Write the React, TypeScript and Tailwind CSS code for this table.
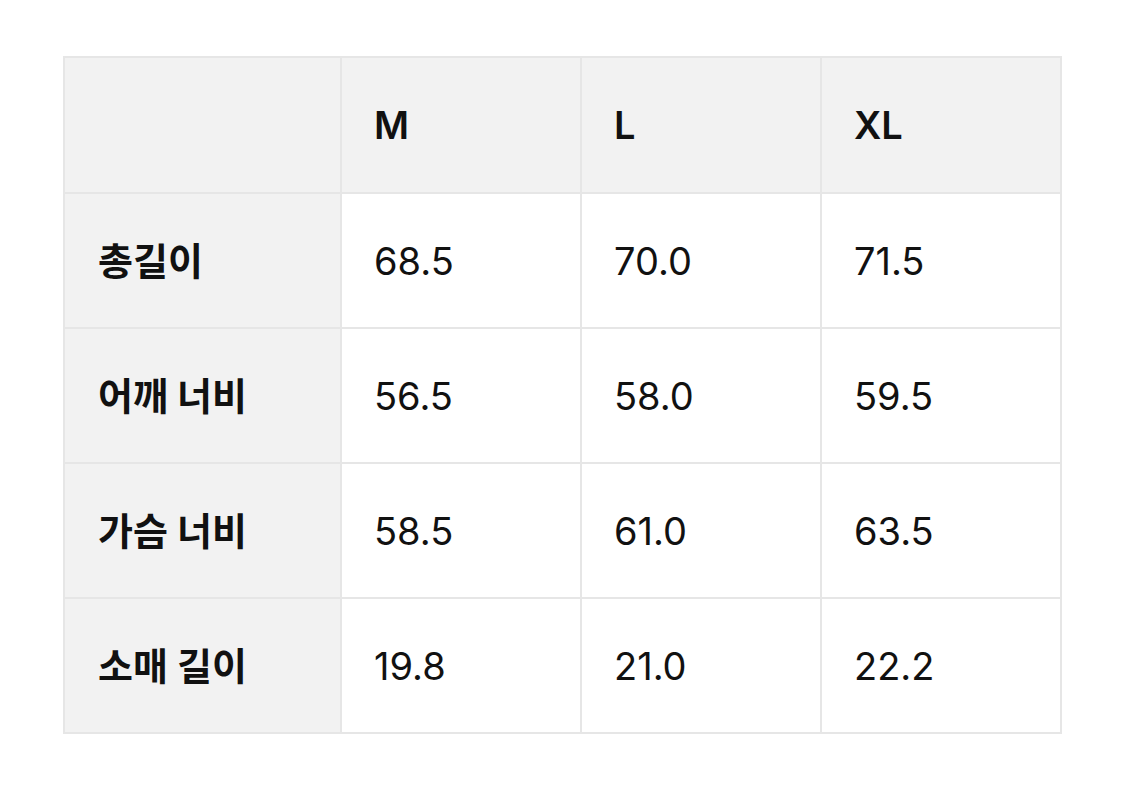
import React from 'react';

const SIZES = ['M', 'L', 'XL'];

const ROWS = [
  { label: '총길이', values: ['68.5', '70.0', '71.5'] },
  { label: '어깨 너비', values: ['56.5', '58.0', '59.5'] },
  { label: '가슴 너비', values: ['58.5', '61.0', '63.5'] },
  { label: '소매 길이', values: ['19.8', '21.0', '22.2'] },
];

export default function App() {
  return (
    <div
      className="w-[1125px] h-[791px] bg-white pt-[56px] pl-[63px]"
      style={{ fontFamily: 'Inter, "Noto Sans CJK KR", sans-serif' }}
    >
      <table className="border-collapse text-[#111111] text-[38px] leading-none">
        <thead>
          <tr className="h-[136px] bg-[#f2f2f2]">
            <th className="w-[277px] border-2 border-[#e6e6e6]" />
            {SIZES.map((s) => (
              <th
                key={s}
                className="w-[240px] border-2 border-[#e6e6e6] pl-[32px] text-left font-semibold"
              >
                {s}
              </th>
            ))}
          </tr>
        </thead>
        <tbody>
          {ROWS.map((row) => (
            <tr key={row.label} className="h-[135px]">
              <td className="bg-[#f2f2f2] border-2 border-[#e6e6e6] pl-[33px] font-bold">
                {row.label}
              </td>
              {row.values.map((v, i) => (
                <td key={i} className="border-2 border-[#e6e6e6] pl-[32px]">
                  {v}
                </td>
              ))}
            </tr>
          ))}
        </tbody>
      </table>
    </div>
  );
}
